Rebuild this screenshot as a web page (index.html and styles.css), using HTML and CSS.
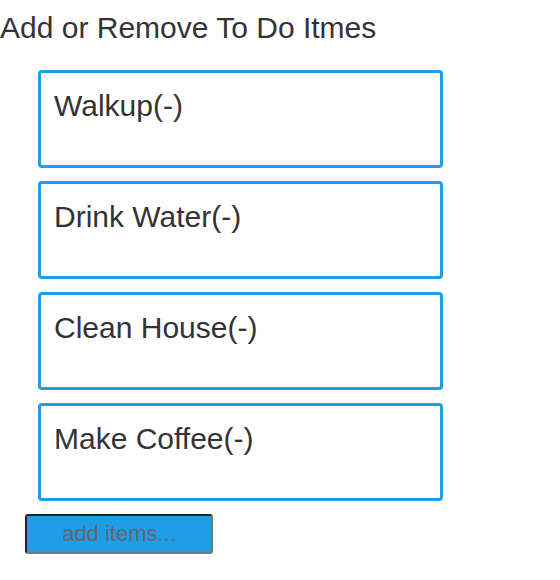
FILE: index.html
```html
<!DOCTYPE html>
<html>
<head>
<meta charset="utf-8">
<link rel="stylesheet" href="styles.css">
</head>
<body>
<div class="app">
  <h1 class="title">Add or Remove To Do Itmes</h1>
  <ul class="list">
    <li class="item">Walkup(-)</li>
    <li class="item">Drink Water(-)</li>
    <li class="item">Clean House(-)</li>
    <li class="item">Make Coffee(-)</li>
  </ul>
  <input class="add" type="text" placeholder="add items...">
</div>
</body>
</html>
```
FILE: styles.css
```css
html, body {
  margin: 0;
  padding: 0;
  background: #fff;
}
.app {
  font-family: "Liberation Sans", Arial, sans-serif;
  color: #333;
}
.title {
  margin: 0;
  padding-top: 10px;
  font-size: 30px;
  font-weight: normal;
  line-height: 36px;
}
.list {
  list-style: none;
  margin: 24px 0 0 0;
  padding: 0 0 0 38px;
  display: flex;
  flex-direction: column;
  gap: 13px;
}
.item {
  box-sizing: border-box;
  width: 405px;
  height: 98px;
  border: 3px solid #1e9de8;
  border-radius: 4px;
  padding: 16px 13px 14px;
  font-size: 30px;
  line-height: 34px;
}
.add {
  display: block;
  box-sizing: border-box;
  margin: 13px 0 0 25px;
  width: 188px;
  height: 40px;
  background: #1e9de8;
  border: 2px solid #777;
  border-color: #222 #777 #777 #222;
  border-radius: 3px;
  font-family: "Liberation Sans", Arial, sans-serif;
  font-size: 22px;
  text-align: center;
  color: #333;
  padding: 0;
}
.add::placeholder {
  color: #666;
}
```
